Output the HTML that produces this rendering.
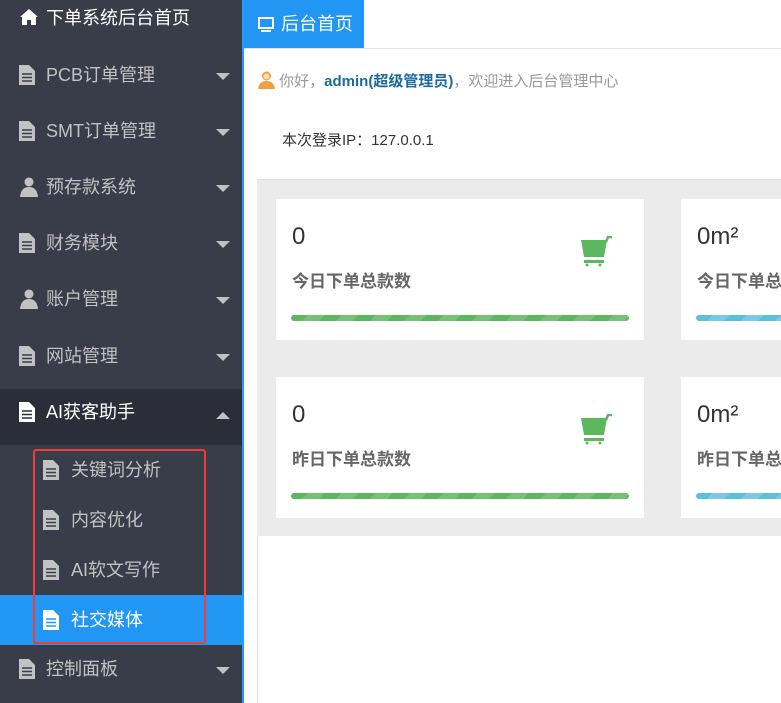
<!DOCTYPE html>
<html><head><meta charset="utf-8"><style>
*{margin:0;padding:0;box-sizing:border-box}
body{width:781px;height:703px;overflow:hidden;background:#fff;font-family:"Liberation Sans","Noto Sans CJK SC",sans-serif;position:relative}
.side{position:absolute;left:0;top:0;width:242px;height:703px;background:#393d49}
.bl{position:absolute;left:242px;top:0;width:2px;height:703px;background:#1e9fff}
.it{position:absolute;left:0;width:242px;height:56px;color:#c2c2c2;font-size:18px;line-height:56px;padding-left:46px}
.it .ic{position:absolute;left:19px;top:18px}
.car{position:absolute;right:12px;top:26px;width:0;height:0;border-left:7px solid transparent;border-right:7px solid transparent;border-top:7px solid #c2c2c2}
.up{border-top:none;border-bottom:7px solid #c2c2c2;top:23px}
.sub{position:absolute;left:0;width:242px;height:50px;color:#c2c2c2;font-size:18px;line-height:50px;padding-left:71px}
.sub .ic{position:absolute;left:43px;top:15px}
.tab{position:absolute;left:244px;top:0;width:120px;height:48px;background:#2196f3;color:#fff;font-size:18px;line-height:48px;padding-left:37px}
.hl{position:absolute;left:244px;top:48px;right:0;height:1px;background:#e2e2e2}
.gray{position:absolute;left:257px;top:179px;right:0;height:357px;background:#ebebeb;border-top:1px solid #e0e0e0}
.vl{position:absolute;left:257px;top:536px;width:1px;height:167px;background:#e2e2e2}
.card{position:absolute;background:#fff;width:368px;height:141px}
.num{position:absolute;left:16px;top:24px;font-size:24px;color:#333}
.lab{position:absolute;left:16px;top:68px;font-size:17px;font-weight:bold;color:#666}
.bar{position:absolute;left:15px;top:116px;width:338px;height:6px;border-radius:3px;background:repeating-linear-gradient(135deg,#5cb85c 0 12px,#74c374 12px 24px)}
.blue{background:repeating-linear-gradient(135deg,#5bc0de 0 12px,#77cbe4 12px 24px)}
.cart{position:absolute;left:305px;top:37px}
</style></head><body>
<div class="side">
<div class="it" style="top:-10px;color:#fff"><svg class="ic" width="20" height="18" viewBox="0 0 20 18"><path d="M10 1 L1 9 L3 9 L3 17 L8 17 L8 12 L12 12 L12 17 L17 17 L17 9 L19 9Z" fill="#fff"/></svg>下单系统后台首页</div>
<div class="it" style="top:47px"><svg class="ic" width="16" height="20"><path d="M0 0H10L16 6V20H0Z" fill="#c2c2c2"/><path d="M3 9H13M3 12.5H13M3 16H13" stroke="#393d49" stroke-width="1.5"/></svg>PCB订单管理<span class="car"></span></div>
<div class="it" style="top:103px"><svg class="ic" width="16" height="20"><path d="M0 0H10L16 6V20H0Z" fill="#c2c2c2"/><path d="M3 9H13M3 12.5H13M3 16H13" stroke="#393d49" stroke-width="1.5"/></svg>SMT订单管理<span class="car"></span></div>
<div class="it" style="top:159px"><svg class="ic" width="20" height="20"><circle cx="10" cy="5" r="4.5" fill="#c2c2c2"/><path d="M1 20 Q2 10 10 10 Q18 10 19 20Z" fill="#c2c2c2"/></svg>预存款系统<span class="car"></span></div>
<div class="it" style="top:215px"><svg class="ic" width="16" height="20"><path d="M0 0H10L16 6V20H0Z" fill="#c2c2c2"/><path d="M3 9H13M3 12.5H13M3 16H13" stroke="#393d49" stroke-width="1.5"/></svg>财务模块<span class="car"></span></div>
<div class="it" style="top:271px"><svg class="ic" width="20" height="20"><circle cx="10" cy="5" r="4.5" fill="#c2c2c2"/><path d="M1 20 Q2 10 10 10 Q18 10 19 20Z" fill="#c2c2c2"/></svg>账户管理<span class="car"></span></div>
<div class="it" style="top:328px"><svg class="ic" width="16" height="20"><path d="M0 0H10L16 6V20H0Z" fill="#c2c2c2"/><path d="M3 9H13M3 12.5H13M3 16H13" stroke="#393d49" stroke-width="1.5"/></svg>网站管理<span class="car"></span></div>
<div class="it" style="top:389px;background:#2b2e38;color:#fff;line-height:46px"><svg class="ic" width="16" height="20" style="top:13px"><path d="M0 0H10L16 6V20H0Z" fill="#fff"/><path d="M3 9H13M3 12.5H13M3 16H13" stroke="#2b2e38" stroke-width="1.5"/></svg>AI获客助手<span class="car up"></span></div>
<div class="sub" style="top:445px"><svg class="ic" width="16" height="20"><path d="M0 0H10L16 6V20H0Z" fill="#c2c2c2"/><path d="M3 9H13M3 12.5H13M3 16H13" stroke="#393d49" stroke-width="1.5"/></svg>关键词分析</div>
<div class="sub" style="top:495px"><svg class="ic" width="16" height="20"><path d="M0 0H10L16 6V20H0Z" fill="#c2c2c2"/><path d="M3 9H13M3 12.5H13M3 16H13" stroke="#393d49" stroke-width="1.5"/></svg>内容优化</div>
<div class="sub" style="top:545px"><svg class="ic" width="16" height="20"><path d="M0 0H10L16 6V20H0Z" fill="#c2c2c2"/><path d="M3 9H13M3 12.5H13M3 16H13" stroke="#393d49" stroke-width="1.5"/></svg>AI软文写作</div>
<div class="sub" style="top:595px;background:#2196f3;color:#fff"><svg class="ic" width="16" height="20"><path d="M0 0H10L16 6V20H0Z" fill="#fff"/><path d="M3 9H13M3 12.5H13M3 16H13" stroke="#2196f3" stroke-width="1.5"/></svg>社交媒体</div>
<div style="position:absolute;left:33px;top:449px;width:173px;height:195px;border:2px solid #f03c3c;border-radius:3px"></div>
<div class="it" style="top:641px"><svg class="ic" width="16" height="20"><path d="M0 0H10L16 6V20H0Z" fill="#c2c2c2"/><path d="M3 9H13M3 12.5H13M3 16H13" stroke="#393d49" stroke-width="1.5"/></svg>控制面板<span class="car"></span></div>
</div>
<div class="bl"></div>
<div class="tab"><svg style="position:absolute;left:14px;top:17px" width="16" height="16"><rect x="1" y="1" width="14" height="10" fill="none" stroke="#fff" stroke-width="2"/><path d="M3 14H13" stroke="#fff" stroke-width="2"/></svg>后台首页</div>
<div class="hl"></div>
<div style="position:absolute;left:258px;top:70px;font-size:15px;color:#999;white-space:nowrap"><svg width="17" height="18" style="vertical-align:-3px"><circle cx="8.5" cy="5" r="4.5" fill="#f0a040"/><circle cx="8.5" cy="5.5" r="3" fill="#fde0b0"/><path d="M0 18 Q1 10 8.5 10 Q16 10 17 18Z" fill="#f0a040"/></svg> 你好，<b style="color:#1a6aa0">admin(超级管理员)</b>，欢迎进入后台管理中心</div>
<div style="position:absolute;left:282px;top:129px;font-size:15px;color:#333">本次登录IP：127.0.0.1</div>
<div class="gray">
<div class="card" style="left:19px;top:19px"><div class="num">0</div><div class="lab">今日下单总款数</div><div class="bar"></div><svg class="cart" width="32" height="32"><path d="M0 4H26L23 21H3Z" fill="#5cb85c"/><path d="M25 6L27 1H31" stroke="#5cb85c" stroke-width="2.5" fill="none"/><rect x="3" y="24" width="20" height="3" fill="#5cb85c"/><circle cx="6" cy="29" r="1.5" fill="#5cb85c"/><circle cx="19" cy="29" r="1.5" fill="#5cb85c"/></svg></div>
<div class="card" style="left:424px;top:19px"><div class="num">0m²</div><div class="lab">今日下单总面积</div><div class="bar blue"></div></div>
<div class="card" style="left:19px;top:197px"><div class="num">0</div><div class="lab">昨日下单总款数</div><div class="bar"></div><svg class="cart" width="32" height="32"><path d="M0 4H26L23 21H3Z" fill="#5cb85c"/><path d="M25 6L27 1H31" stroke="#5cb85c" stroke-width="2.5" fill="none"/><rect x="3" y="24" width="20" height="3" fill="#5cb85c"/><circle cx="6" cy="29" r="1.5" fill="#5cb85c"/><circle cx="19" cy="29" r="1.5" fill="#5cb85c"/></svg></div>
<div class="card" style="left:424px;top:197px"><div class="num">0m²</div><div class="lab">昨日下单总面积</div><div class="bar blue"></div></div>
</div>
<div class="vl"></div>
</body></html>
